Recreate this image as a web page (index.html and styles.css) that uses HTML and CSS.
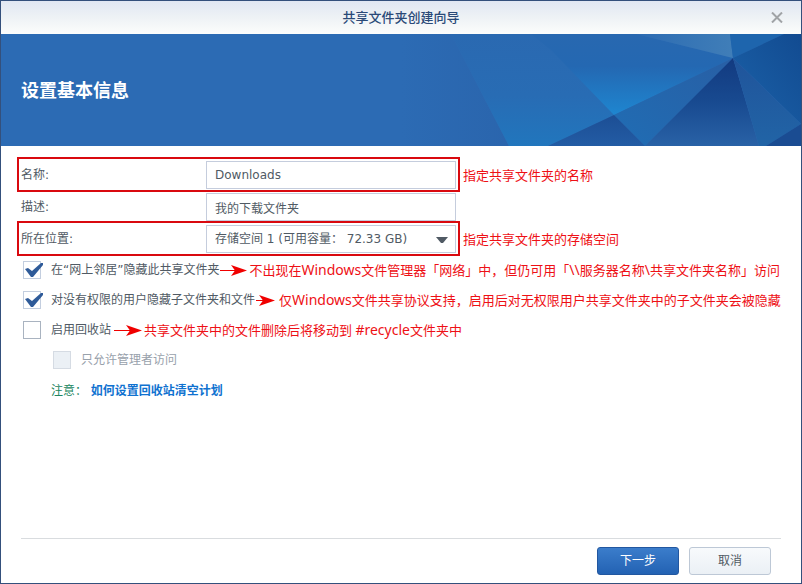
FILE: index.html
```html
<!DOCTYPE html>
<html lang="zh-CN">
<head>
<meta charset="utf-8">
<meta name="viewport" content="width=device-width, initial-scale=1">
<title>共享文件夹创建向导</title>
<link rel="stylesheet" href="styles.css">
</head>
<body>
<div class="window">
  <header class="titlebar">
    <h1 class="title">共享文件夹创建向导</h1>
    <button class="close" type="button" aria-label="关闭">
      <svg width="12" height="11" viewBox="0 0 12 11"><path d="M1 .5 11 10.500M11 .5 1 10.500" stroke="#a0a3a6" stroke-width="2" fill="none"/></svg>
    </button>
  </header>
  <div class="banner">
    <svg class="facets" width="400" height="112" viewBox="0 0 400 112" aria-hidden="true">
      <defs>
        <linearGradient id="left" x1="0" y1="0" x2="0" y2="1"><stop offset="0" stop-color="#2a69b1"/><stop offset=".55" stop-color="#286cb4"/><stop offset="1" stop-color="#2176bd"/></linearGradient>
        <linearGradient id="fade" x1="0" y1="0" x2="1" y2="0"><stop offset="0" stop-color="#2c6bb4"/><stop offset="1" stop-color="#2a65ad"/></linearGradient>
        <linearGradient id="bright" x1="0" y1="0" x2="0" y2="1"><stop offset="0" stop-color="#2868b0"/><stop offset=".4" stop-color="#2468b2"/><stop offset="1" stop-color="#1e86d0"/></linearGradient>
        <linearGradient id="light" x1="0" y1="0" x2="1" y2="0"><stop offset="0" stop-color="#2c6bb2"/><stop offset="1" stop-color="#407eb8"/></linearGradient>
        <linearGradient id="dark" x1="0" y1="0" x2="0" y2="1"><stop offset="0" stop-color="#123a80"/><stop offset=".5" stop-color="#184a90"/><stop offset="1" stop-color="#2962a6"/></linearGradient>
        <linearGradient id="wing" x1="1" y1="0" x2="0" y2="1"><stop offset="0" stop-color="#285fa5"/><stop offset="1" stop-color="#206db4"/></linearGradient>
        <linearGradient id="low" x1="0" y1="0" x2="0" y2="1"><stop offset="0" stop-color="#1c4e95"/><stop offset="1" stop-color="#235ca4"/></linearGradient>
        <linearGradient id="right" x1="1" y1="0" x2="0" y2="1"><stop offset="0" stop-color="#124b91"/><stop offset="1" stop-color="#1b62a9"/></linearGradient>
        <linearGradient id="shard" x1="0" y1="0" x2="0" y2="1"><stop offset="0" stop-color="#20549b"/><stop offset="1" stop-color="#2164a6"/></linearGradient>
      </defs>
      <path fill="url(#fade)" d="M0 0H50L108 112H0Z"/>
      <path fill="url(#left)" d="M50 0H240L213 81 147 112H108Z"/>
      <path fill="url(#bright)" d="M130 0H235L332 24 213 81 150 16Z"/>
      <path fill="url(#light)" d="M235 0H329L332 24Z"/>
      <path fill="#1e65ad" d="M329 0H383L332 24Z"/>
      <path fill="url(#right)" d="M383 0H400V90L332 24Z"/>
      <path fill="url(#wing)" d="M332 24 213 81 244 112Z"/>
      <path fill="url(#low)" d="M213 81 244 112H147Z"/>
      <path fill="url(#dark)" d="M332 24 358 112H244Z"/>
      <path fill="url(#shard)" d="M332 24 400 90 365 112H358Z"/>
      <path fill="#1a4c92" d="M400 90V112H365Z"/>
    </svg>
    <h2 class="heading">设置基本信息</h2>
  </div>
  <form class="content">
    <div class="row">
      <div class="pair marked"><label for="name">名称:</label><input class="field" id="name" type="text" value="Downloads"></div>
      <span class="note">指定共享文件夹的名称</span>
    </div>
    <div class="row">
      <div class="pair"><label for="desc">描述:</label><input class="field" id="desc" type="text" value="我的下载文件夹"></div>
    </div>
    <div class="row">
      <div class="pair marked"><label for="place">所在位置:</label><select class="field" id="place"><option>存储空间 1 (可用容量： 72.33 GB)</option></select><svg class="caret" width="12" height="6" viewBox="0 0 12 6" aria-hidden="true"><path d="M0 0H12L7 6H5Z" fill="#505a64"/></svg></div>
      <span class="note">指定共享文件夹的存储空间</span>
    </div>
    <div class="options">
      <div class="option">
        <input class="check" id="hide" type="checkbox" checked><label for="hide">在“网上邻居”隐藏此共享文件夹</label>
        <svg class="arrow" width="28" height="11" viewBox="0 0 28 11" aria-hidden="true"><path d="M0 5H17V6H0ZM11 0 27 5.500 11 11 15 5.500Z"/></svg>
        <span class="note">不出现在<span class="latin">Windows</span>文件管理器「网络」中，但仍可用「<span class="latin">\\</span>服务器名称<span class="latin">\</span>共享文件夹名称」访问</span>
      </div>
      <div class="option">
        <input class="check" id="sub" type="checkbox" checked><label for="sub">对没有权限的用户隐藏子文件夹和文件</label>
        <svg class="arrow" width="22" height="11" viewBox="0 0 22 11" aria-hidden="true"><path d="M0 5H9V6H0ZM3 0 19 5.500 3 11 7 5.500Z"/></svg>
        <span class="note">仅<span class="latin">Windows</span>文件共享协议支持，启用后对无权限用户共享文件夹中的子文件夹会被隐藏</span>
      </div>
      <div class="option">
        <input class="check" id="bin" type="checkbox"><label for="bin">启用回收站</label>
        <svg class="arrow" width="31" height="11" viewBox="0 0 31 11" aria-hidden="true"><path d="M2 5H19V6H2ZM14 0 30 5.500 14 11 18 5.500Z"/></svg>
        <span class="note">共享文件夹中的文件删除后将移动到 <span class="latin">#recycle</span>文件夹中</span>
      </div>
      <div class="option nested">
        <input class="check" id="admin" type="checkbox" disabled><label for="admin">只允许管理者访问</label>
      </div>
      <p class="hint"><span class="hint-label">注意：</span> <a href="#plan">如何设置回收站清空计划</a></p>
    </div>
  </form>
  <footer class="actions">
    <button class="button primary" type="button">下一步</button>
    <button class="button" type="button">取消</button>
  </footer>
</div>
</body>
</html>
```
FILE: styles.css
```css
* {
  box-sizing: border-box;
}

body {
  margin: 0;
  font: 12px/18px "DejaVu Sans", "Noto Sans CJK SC", sans-serif;
  color: #505a64;
}

.window {
  display: flex;
  flex-direction: column;
  min-height: 100vh;
  border: 1px solid #34507c;
  background: #fff;
}

.titlebar {
  display: grid;
  grid-template-columns: 32px 1fr 32px;
  align-items: center;
  height: 33px;
  padding: 0 8px;
  background: linear-gradient(#e1e7f3, #eef2f5 50%, #fcfdfc);
}

.title {
  grid-column: 2;
  margin: 0;
  text-align: center;
  font-size: 13px;
  font-weight: 500;
  color: #2a4a78;
}

.close {
  display: grid;
  place-items: center;
  height: 32px;
  padding: 0;
  border: 0;
  background: none;
}

.banner {
  position: relative;
  display: flex;
  align-items: center;
  height: 112px;
  padding: 2px 20px 0;
  background: #2c6bb4;
  overflow: hidden;
}

.facets {
  position: absolute;
  top: 0;
  right: 0;
}

.heading {
  position: relative;
  margin: 0;
  font-size: 18px;
  line-height: 24px;
  font-weight: bold;
  color: #fff;
}

.content {
  flex: 1;
  display: flex;
  flex-direction: column;
  gap: 4px;
  padding: 15px 0 12px 20px;
  white-space: nowrap;
}

.row {
  display: flex;
  align-items: center;
  gap: 7px;
}

.pair {
  position: relative;
  display: grid;
  grid-template-columns: 185px 250px;
  align-items: center;
}

.marked::before {
  content: "";
  position: absolute;
  inset: -4px -4px -3px;
  border: 2px solid #d9090f;
  pointer-events: none;
}

.field {
  appearance: none;
  width: 100%;
  height: 28px;
  padding: 0 8px;
  border: 1px solid #c5cddd;
  border-radius: 0;
  background: #fff;
  color: inherit;
  font: inherit;
}

.caret {
  position: absolute;
  right: 8px;
  top: 12px;
  pointer-events: none;
}

.note {
  font-family: "Noto Sans", "Noto Sans CJK SC", sans-serif;
  font-size: 13px;
  color: #ee1015;
}

.latin {
  font-size: 14px;
}

.options {
  margin-top: -2px;
}

.option {
  display: flex;
  align-items: center;
  height: 30px;
  padding-left: 2px;
}

.nested {
  padding-left: 32px;
  color: #98a1ab;
}

.check {
  appearance: none;
  position: relative;
  flex: none;
  width: 18px;
  height: 18px;
  margin: 0 10px 0 0;
  border: 1px solid #a9b3c0;
  background: #fff;
}

.check:checked {
  border-color: #c3cedf;
}

.check:checked::after {
  content: "";
  position: absolute;
  top: 1px;
  left: 1px;
  width: 18px;
  height: 14px;
  background: url("data:image/svg+xml,%3Csvg xmlns='http://www.w3.org/2000/svg' viewBox='0 0 18 14'%3E%3Cpath d='M0 6 3 5 7 8 16 0H18V2L8 14H6Z' fill='%232f5b99'/%3E%3C/svg%3E") no-repeat;
}

.check:disabled {
  border-color: #d5dbe3;
  background: #ebf0f5;
}

.arrow {
  flex: none;
  margin-left: 1px;
  fill: #f00000;
}

.arrow + .note {
  margin-left: 1px;
}

.hint {
  margin: 7px 0 0 30px;
}

.hint-label {
  color: #208560;
}

.hint a {
  color: #0f72d0;
  font-weight: bold;
  text-decoration: none;
}

.actions {
  display: flex;
  justify-content: flex-end;
  gap: 10px;
  margin: 0 20px;
  padding: 8px 10px;
  border-top: 1px solid #d9dcdf;
}

.button {
  width: 82px;
  height: 28px;
  padding: 0;
  border: 1px solid #bdc8d6;
  border-radius: 3px;
  background: linear-gradient(#f8fafc, #ebf0f5);
  color: inherit;
  font: inherit;
}

.primary {
  border-color: #2257a0;
  background: linear-gradient(#3b7dcb, #2362b3);
  color: #fff;
}
```
